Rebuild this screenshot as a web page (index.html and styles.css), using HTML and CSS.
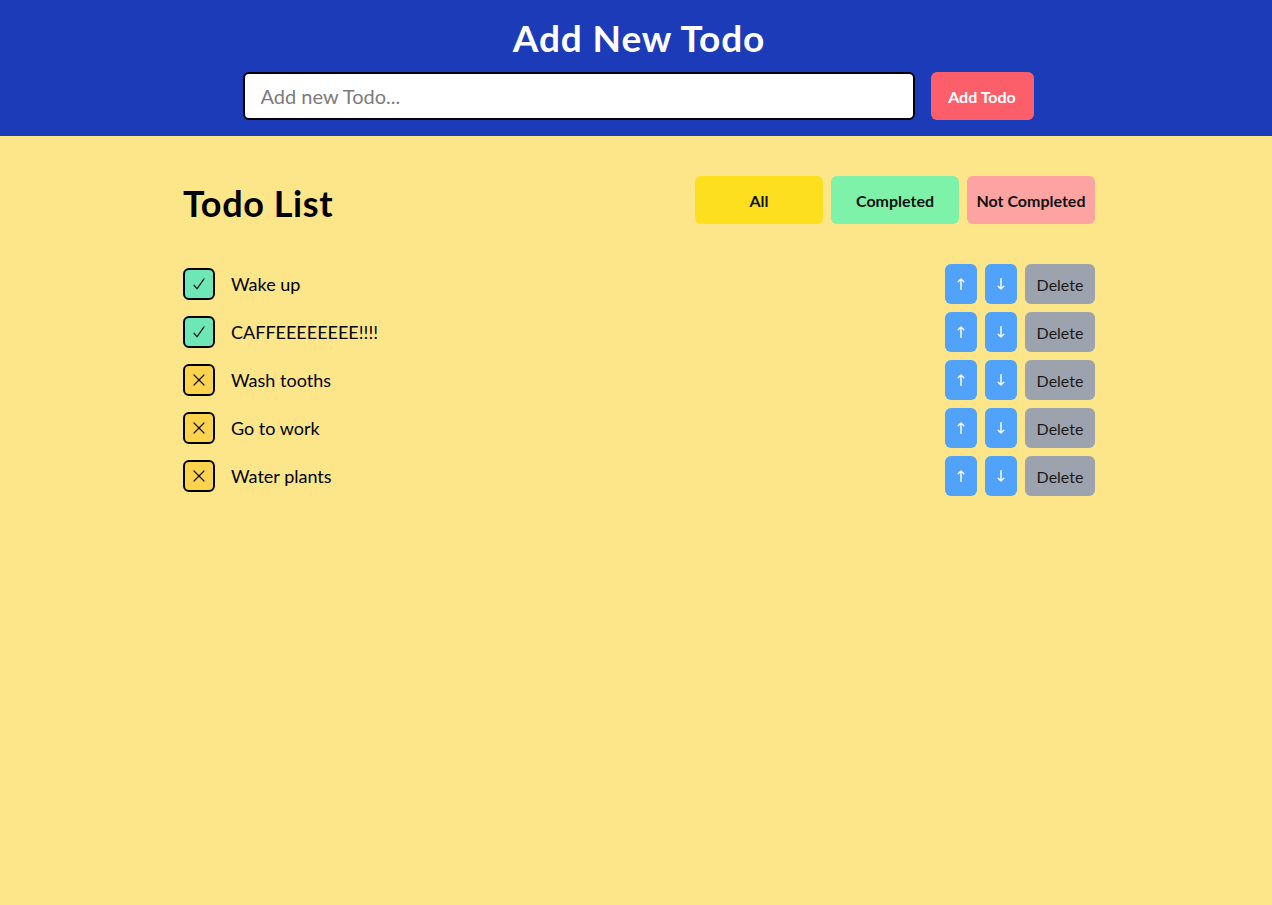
FILE: index.html
```html
<!DOCTYPE html>
<html lang="en">
<head>
<meta charset="utf-8">
<title>Todo</title>
<link rel="stylesheet" href="styles.css">
</head>
<body>
<header class="top">
  <h1 class="top-title">Add New Todo</h1>
  <form class="add-form">
    <input class="add-input" type="text" placeholder="Add new Todo...">
    <button class="add-btn" type="button">Add Todo</button>
  </form>
</header>
<main class="main">
  <div class="list-head">
    <h2 class="list-title">Todo List</h2>
    <div class="filters">
      <button class="filter filter-all" type="button">All</button>
      <button class="filter filter-done" type="button">Completed</button>
      <button class="filter filter-open" type="button">Not Completed</button>
    </div>
  </div>
  <ul class="todos">
    <li class="todo">
      <span class="check check-done"><svg class="mark" viewBox="0 0 12 12"><path d="M1 7.2 L4 10.8 L11 0.8"/></svg></span>
      <span class="todo-text">Wake up</span>
      <div class="actions">
        <button class="arrow" aria-label="Move up"><svg class="arr" viewBox="0 0 8 12"><path d="M4 11.5 V1 M1.2 3.8 L4 1 L6.8 3.8"/></svg></button>
        <button class="arrow" aria-label="Move down"><svg class="arr" viewBox="0 0 8 12"><path d="M4 0.5 V11 M1.2 8.2 L4 11 L6.8 8.2"/></svg></button>
        <button class="del">Delete</button>
      </div>
    </li>
    <li class="todo">
      <span class="check check-done"><svg class="mark" viewBox="0 0 12 12"><path d="M1 7.2 L4 10.8 L11 0.8"/></svg></span>
      <span class="todo-text">CAFFEEEEEEEE!!!!</span>
      <div class="actions">
        <button class="arrow" aria-label="Move up"><svg class="arr" viewBox="0 0 8 12"><path d="M4 11.5 V1 M1.2 3.8 L4 1 L6.8 3.8"/></svg></button>
        <button class="arrow" aria-label="Move down"><svg class="arr" viewBox="0 0 8 12"><path d="M4 0.5 V11 M1.2 8.2 L4 11 L6.8 8.2"/></svg></button>
        <button class="del">Delete</button>
      </div>
    </li>
    <li class="todo">
      <span class="check check-open"><svg class="mark" viewBox="0 0 12 12"><path d="M1 1 L11 11 M11 1 L1 11"/></svg></span>
      <span class="todo-text">Wash tooths</span>
      <div class="actions">
        <button class="arrow" aria-label="Move up"><svg class="arr" viewBox="0 0 8 12"><path d="M4 11.5 V1 M1.2 3.8 L4 1 L6.8 3.8"/></svg></button>
        <button class="arrow" aria-label="Move down"><svg class="arr" viewBox="0 0 8 12"><path d="M4 0.5 V11 M1.2 8.2 L4 11 L6.8 8.2"/></svg></button>
        <button class="del">Delete</button>
      </div>
    </li>
    <li class="todo">
      <span class="check check-open"><svg class="mark" viewBox="0 0 12 12"><path d="M1 1 L11 11 M11 1 L1 11"/></svg></span>
      <span class="todo-text">Go to work</span>
      <div class="actions">
        <button class="arrow" aria-label="Move up"><svg class="arr" viewBox="0 0 8 12"><path d="M4 11.5 V1 M1.2 3.8 L4 1 L6.8 3.8"/></svg></button>
        <button class="arrow" aria-label="Move down"><svg class="arr" viewBox="0 0 8 12"><path d="M4 0.5 V11 M1.2 8.2 L4 11 L6.8 8.2"/></svg></button>
        <button class="del">Delete</button>
      </div>
    </li>
    <li class="todo">
      <span class="check check-open"><svg class="mark" viewBox="0 0 12 12"><path d="M1 1 L11 11 M11 1 L1 11"/></svg></span>
      <span class="todo-text">Water plants</span>
      <div class="actions">
        <button class="arrow" aria-label="Move up"><svg class="arr" viewBox="0 0 8 12"><path d="M4 11.5 V1 M1.2 3.8 L4 1 L6.8 3.8"/></svg></button>
        <button class="arrow" aria-label="Move down"><svg class="arr" viewBox="0 0 8 12"><path d="M4 0.5 V11 M1.2 8.2 L4 11 L6.8 8.2"/></svg></button>
        <button class="del">Delete</button>
      </div>
    </li>
  </ul>
</main>
</body>
</html>
```

FILE: styles.css
```css
* { box-sizing: border-box; }
html, body {
  margin: 0;
  padding: 0;
  min-height: 100%;
}
body {
  background: #fde68a;
  font-family: Lato, "Noto Sans", sans-serif;
  color: #000;
  min-height: 905px;
}
button { font-family: inherit; cursor: pointer; }

.top {
  background: #1c3bb8;
  height: 136px;
  padding-top: 15px;
  display: flex;
  flex-direction: column;
  align-items: center;
}
.top-title {
  margin: 0;
  color: #fff;
  font-size: 37px;
  font-weight: 700;
  line-height: 45px;
  letter-spacing: 0.9px;
  padding-left: 6px;
}
.add-form {
  margin-top: 12px;
  display: flex;
  gap: 16px;
  padding-left: 4px;
}
.add-input {
  width: 672px;
  height: 48px;
  border: 2px solid #000;
  border-radius: 6px;
  padding: 0 16px;
  font-family: inherit;
  font-size: 20px;
  background: #fff;
  outline: none;
}
.add-input::placeholder { color: #7b7b7b; }
.add-btn {
  width: 103px;
  height: 48px;
  border: none;
  border-radius: 6px;
  background: #fd5f6a;
  color: #fff;
  font-weight: 700;
  font-size: 16px;
}

.main {
  width: 918px;
  margin: 0 auto;
  padding: 40px 0 0 6px;
}
.list-head {
  display: flex;
  justify-content: space-between;
  align-items: flex-start;
  height: 48px;
}
.list-title {
  margin: 0;
  font-size: 36px;
  font-weight: 700;
  line-height: 48px;
  letter-spacing: 0.6px;
  padding-top: 3px;
}
.filters {
  display: flex;
  gap: 8px;
}
.filter {
  width: 128px;
  height: 48px;
  border: none;
  border-radius: 6px;
  font-size: 16px;
  font-weight: 700;
  color: #111;
}
.filter-all { background: #fddf20; }
.filter-done { background: #7ef2a9; }
.filter-open { background: #fda3a1; }

.todos {
  list-style: none;
  margin: 40px 0 0;
  padding: 0;
  display: flex;
  flex-direction: column;
  gap: 8px;
}
.todo {
  display: flex;
  align-items: center;
  height: 40px;
}
.check {
  width: 32px;
  height: 32px;
  border: 2px solid #000;
  border-radius: 6px;
  display: flex;
  align-items: center;
  justify-content: center;
  flex: none;
}
.check-done { background: #6ee7b7; }
.check-open { background: #fcd34d; }
.mark {
  width: 12px;
  height: 12px;
  fill: none;
  stroke: #111;
  stroke-width: 1.2;
  stroke-linecap: round;
  stroke-linejoin: round;
}
.todo-text {
  margin-left: 16px;
  font-size: 18px;
  flex: 1;
}
.actions {
  display: flex;
  gap: 8px;
}
.arrow {
  width: 32px;
  height: 40px;
  border: none;
  border-radius: 6px;
  background: #50a2fa;
  padding: 0;
  display: flex;
  align-items: center;
  justify-content: center;
}
.arr {
  width: 8px;
  height: 12px;
  fill: none;
  stroke: #fff;
  stroke-width: 1.4;
  stroke-linecap: round;
  stroke-linejoin: round;
}
.del {
  width: 70px;
  height: 40px;
  border: none;
  border-radius: 6px;
  background: #9ca3af;
  color: #1a1a1a;
  font-size: 16px;
  padding: 0;
}
```
